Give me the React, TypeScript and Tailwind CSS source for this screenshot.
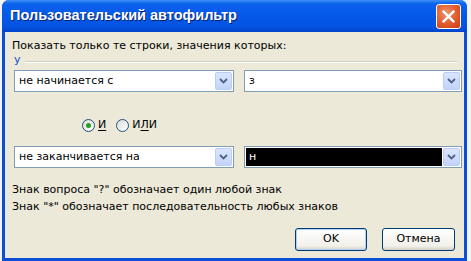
import React from "react";

function ArrowButton() {
  return (
    <span className="flex h-full w-[17px] items-center justify-center rounded-[2px] border border-[#b9cdf6] bg-[linear-gradient(180deg,#dbe6fd_0%,#c2d3fb_100%)]">
      <svg viewBox="0 0 9 6" className="h-[6px] w-[9px]" aria-hidden="true">
        <path d="M1 1l3.5 3.5L8 1" fill="none" stroke="#4d6185" strokeWidth="1.8" />
      </svg>
    </span>
  );
}

function Combo({ text, dark }: { text: string; dark?: boolean }) {
  return (
    <div className="flex h-[22px] items-stretch border border-[#7f9db9] bg-white p-[1px]">
      <span
        className={
          dark
            ? "mr-[1px] flex flex-1 items-center bg-black pl-[3px] text-white"
            : "flex flex-1 items-center pl-[3px] text-black"
        }
      >
        {text}
      </span>
      <ArrowButton />
    </div>
  );
}

function Radio({ checked, label }: { checked?: boolean; label: React.ReactNode }) {
  return (
    <span className="flex items-center gap-[3px]">
      <span className="flex h-[13px] w-[13px] items-center justify-center rounded-full border border-[#1c5180] bg-[linear-gradient(135deg,#dcdcd7_0%,#ffffff_100%)]">
        {checked && <span className="h-[5px] w-[5px] rounded-full bg-[#21a121]" />}
      </span>
      <span>{label}</span>
    </span>
  );
}

export default function App() {
  return (
    <div className="flex h-[261px] w-[471px] bg-[#f4f4f4] pl-[2px] pr-[4px] font-['DejaVu_Sans',sans-serif] text-[11px] text-black">
      <div className="flex flex-1 flex-col overflow-hidden rounded-t-[7px] bg-[#0a4fd8]">
        <div className="flex h-[32px] shrink-0 items-center justify-between bg-[linear-gradient(180deg,#3d8ff8_0%,#0b62ec_12%,#0558e8_50%,#0453e0_85%,#0242c8_100%)] pl-[8px] pr-[6px]">
          <span className="font-['Liberation_Sans',sans-serif] text-[14.5px] font-bold text-white [text-shadow:1px_1px_0_#0a1f6b]">
            Пользовательский автофильтр
          </span>
          <span className="flex h-[25px] w-[25px] items-center justify-center rounded-[3px] border border-white bg-[radial-gradient(circle_at_40%_35%,#f0946c_0%,#e25a2c_55%,#c43d12_100%)]">
            <svg viewBox="0 0 12 12" className="h-[13px] w-[13px]" aria-hidden="true">
              <path d="M1.5 1.5l9 9M10.5 1.5l-9 9" stroke="white" strokeWidth="2.2" strokeLinecap="square" />
            </svg>
          </span>
        </div>
        <div className="mx-[3px] mb-[3px] flex flex-1 flex-col bg-[#ece9d8] px-[7px]">
          <p className="mt-[7px] leading-[13px]">Показать только те строки, значения которых:</p>
          <div className="mt-[1px] flex items-center gap-[4px] pl-[2px]">
            <span className="leading-[13px] text-[#1448c8]">у</span>
            <span className="mt-[4px] h-[2px] flex-1 border-t border-b border-t-[#d0d0bf] border-b-white" />
          </div>
          <div className="mt-[4px] grid grid-cols-[220px_218px] gap-[10px] pl-[2px]">
            <Combo text="не начинается с" />
            <Combo text="з" />
          </div>
          <div className="mt-[26px] flex gap-[10px] pl-[70px] leading-[14px]">
            <Radio checked label={<span className="underline underline-offset-2">И</span>} />
            <Radio label={<span>И<span className="underline underline-offset-2">Л</span>И</span>} />
          </div>
          <div className="mt-[14px] grid grid-cols-[220px_218px] gap-[10px] pl-[2px]">
            <Combo text="не заканчивается на" />
            <Combo text="н" dark />
          </div>
          <p className="mt-[13px] leading-[17px]">Знак вопроса "?" обозначает один любой знак</p>
          <p className="leading-[17px]">Знак "*" обозначает последовательность любых знаков</p>
          <div className="mt-[13px] flex justify-end gap-[15px] pr-[2px]">
            <button className="h-[23px] w-[72px] rounded-[3px] border border-[#003c74] bg-[linear-gradient(180deg,#ffffff_0%,#f2f1ea_80%,#d6d0c5_100%)] shadow-[inset_0_0_0_1px_#b3cdf4]">
              OK
            </button>
            <button className="h-[23px] w-[73px] rounded-[3px] border border-[#003c74] bg-[linear-gradient(180deg,#ffffff_0%,#f2f1ea_80%,#d6d0c5_100%)]">
              Отмена
            </button>
          </div>
        </div>
      </div>
    </div>
  );
}
